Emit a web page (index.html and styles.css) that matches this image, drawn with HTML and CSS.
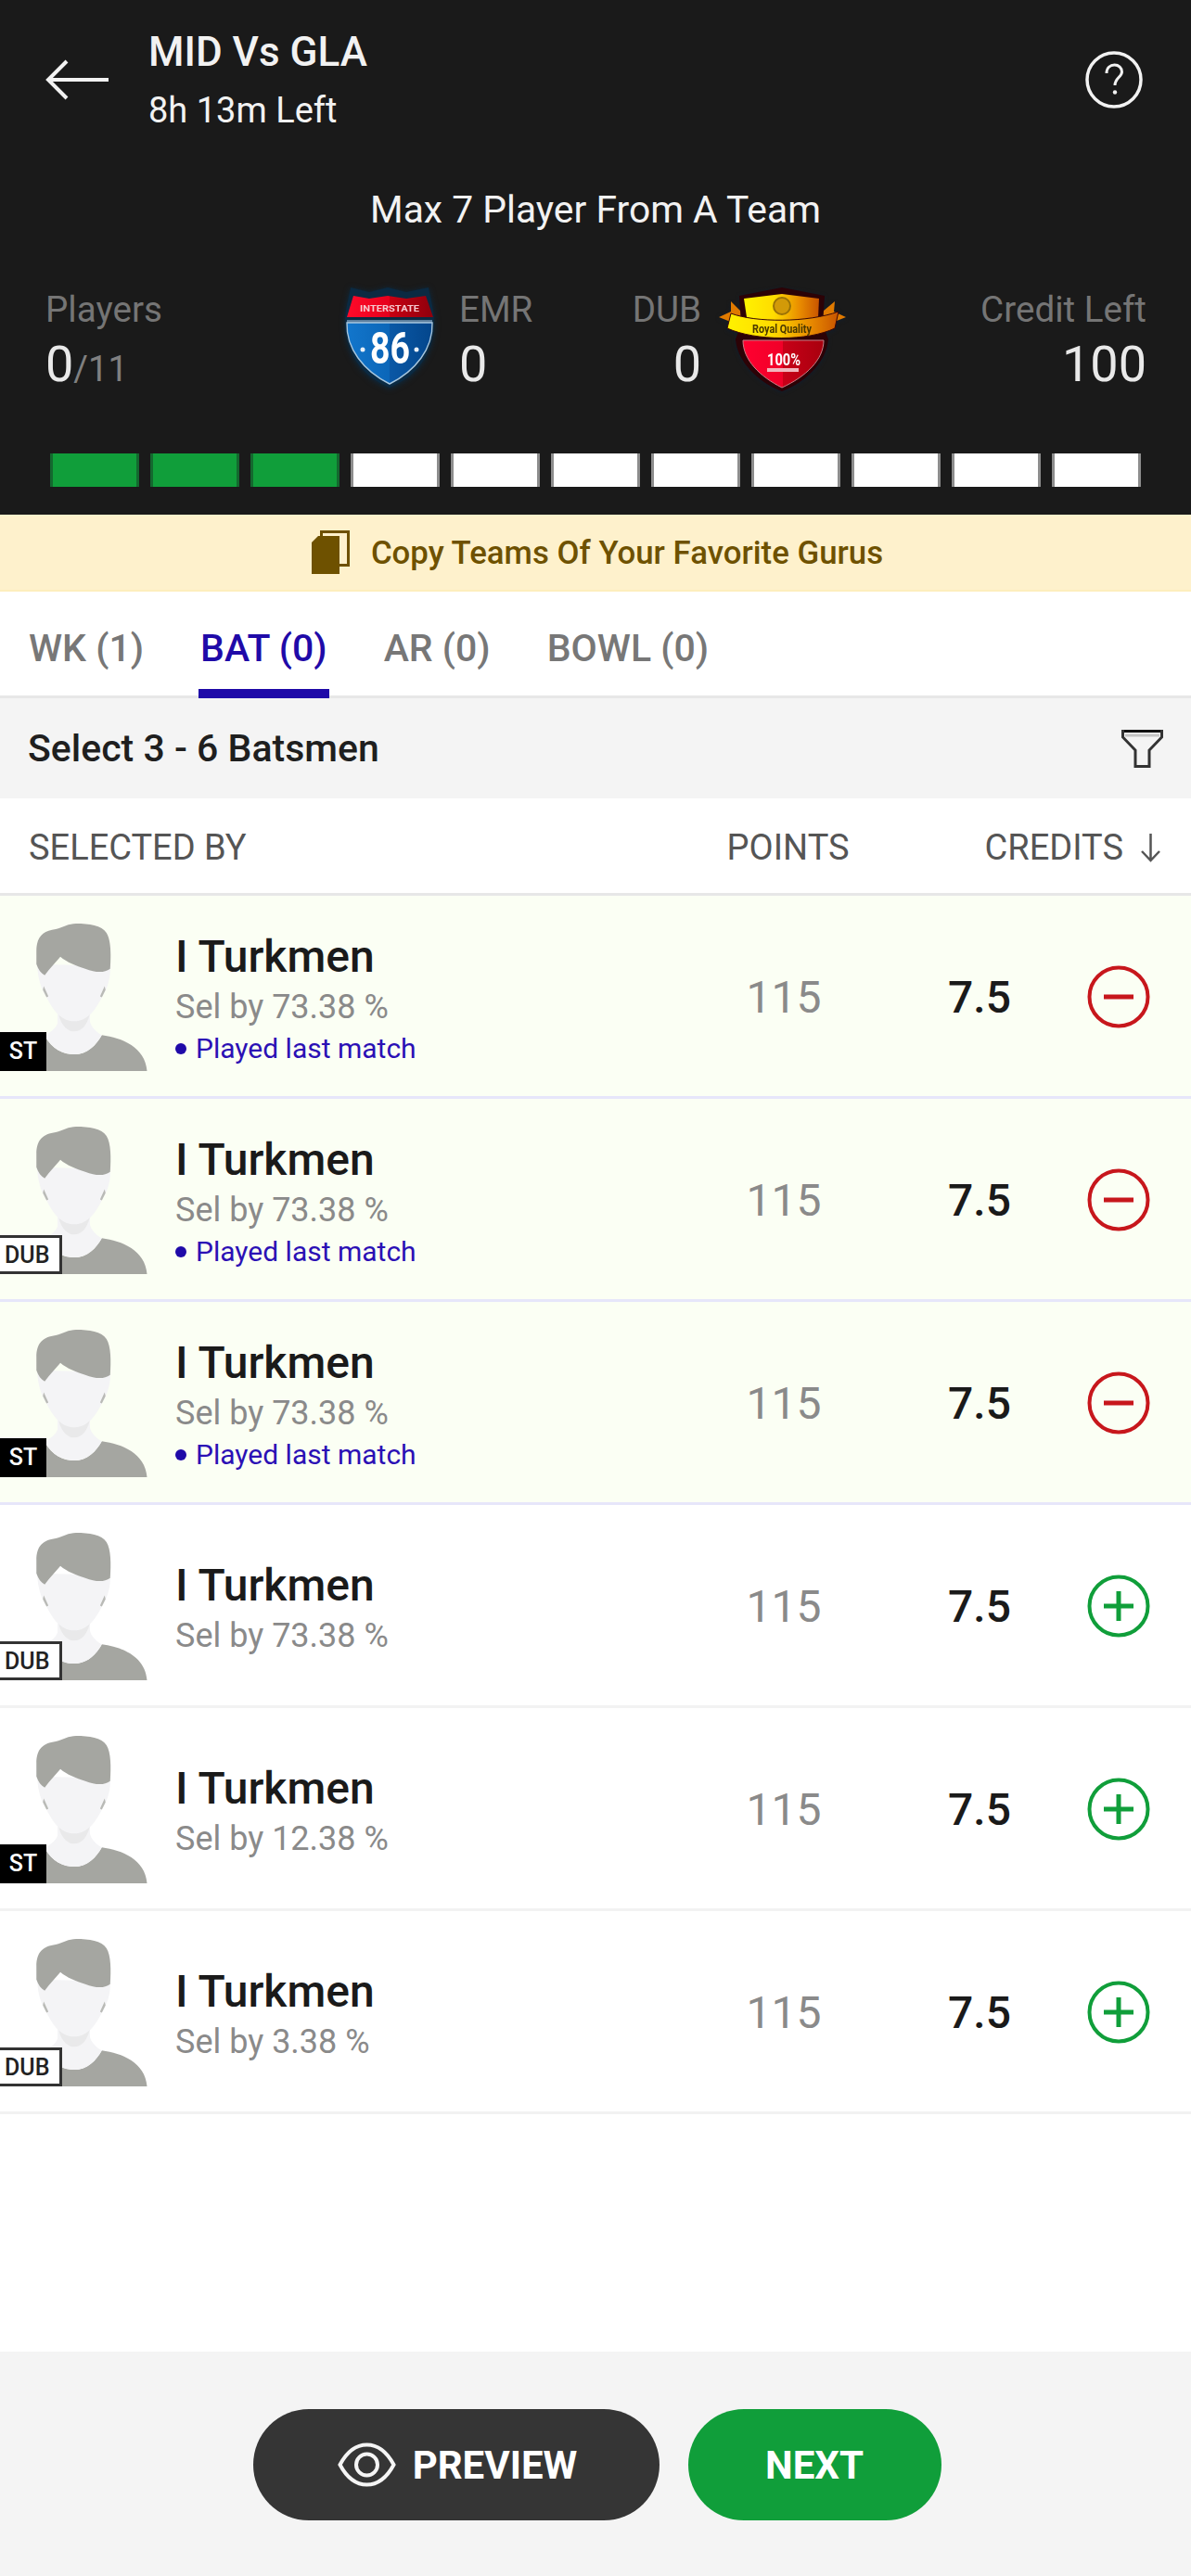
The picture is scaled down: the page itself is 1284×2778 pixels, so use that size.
FILE: index.html
```html
<!DOCTYPE html>
<html lang="en">
<head>
<meta charset="utf-8">
<title>Create Team</title>
<link rel="stylesheet" href="styles.css">
</head>
<body>
<svg class="defs" aria-hidden="true">
  <symbol id="avatar" viewBox="0 0 160 160">
    <path fill="#a5a6a1" d="M0 160C4 138 28 128 48 122C56 136 68 142 80 142C94 142 104 132 110 121C132 124 157 134 159 160Z"/>
    <path fill="#f4f4f6" d="M62 96V108C60 114 54 118 48 122C56 136 68 142 80 142C94 142 104 132 110 121C104 118 98 112 97 106V96Z"/>
    <path fill="#e9e9ea" d="M63 98C66 112 74 117 80 117C88 117 94 110 97 98Z"/>
    <path fill="#f4f4f6" d="M40 44C40 60 45 72 50 80C56 92 65 106 80 106C95 106 104 92 110 80C115 72 120 60 119 46Z"/>
    <path fill="#b9bab6" d="M47 68L52 79L50 80L46 72ZM113 68L108 79L110 80L114 72Z"/>
    <path fill="#a5a6a1" d="M39 30C39 14 46 8 60 6C68 4 74 0 82 0C96 0 110 2 115 10C120 18 120 34 119 49C112 54 103 53 92 49C82 46 72 42 65 36C60 42 54 48 48 56C44 54 41 50 39 44Z"/>
  </symbol>
  <symbol id="ico-minus" viewBox="0 0 68 68">
    <circle cx="34" cy="34" r="31.5" fill="none" stroke="#c7171c" stroke-width="4"/>
    <rect x="18" y="31.5" width="32" height="5" fill="#c7171c"/>
  </symbol>
  <symbol id="ico-plus" viewBox="0 0 68 68">
    <circle cx="34" cy="34" r="31.5" fill="none" stroke="#109e3a" stroke-width="4"/>
    <rect x="18" y="31.5" width="32" height="5" fill="#109e3a"/>
    <rect x="31.5" y="18" width="5" height="32" fill="#109e3a"/>
  </symbol>
</svg>
<div class="app">
  <header class="hdr">
    <div class="topbar">
      <svg class="back" viewBox="0 0 68 44"><path d="M68 22H3M23 2L3 22L23 42" fill="none" stroke="#f2f2f2" stroke-width="4"/></svg>
      <div class="match">
        <div class="match-title">MID Vs GLA</div>
        <div class="match-time">8h 13m Left</div>
      </div>
      <svg class="help" viewBox="0 0 62 62">
        <circle cx="31" cy="31" r="29" fill="none" stroke="#f2f2f2" stroke-width="3.5"/>
        <path d="M23 24C23 18 27 15 31.5 15C36 15 39.5 18 39.5 22.5C39.5 28 32 29 32 37" fill="none" stroke="#f2f2f2" stroke-width="3"/>
        <circle cx="32" cy="44.5" r="2.2" fill="#f2f2f2"/>
      </svg>
    </div>
    <div class="notice">Max 7 Player From A Team</div>
    <div class="stats">
      <div class="stat">
        <div class="stat-label">Players</div>
        <div class="stat-value">0<span class="stat-of">/11</span></div>
      </div>
      <div class="teams">
        <div class="team">
          <svg class="logo-a" viewBox="0 0 96 108">
            <defs>
              <linearGradient id="ba" x1="0" x2="1" y1="0" y2="0"><stop offset="0" stop-color="#1276cc"/><stop offset=".5" stop-color="#0b66b8"/><stop offset=".5" stop-color="#0a58a6"/><stop offset="1" stop-color="#03468c"/></linearGradient>
              <linearGradient id="ra" x1="0" x2="1" y1="0" y2="0"><stop offset="0" stop-color="#ff0a2a"/><stop offset=".5" stop-color="#e6001c"/><stop offset=".5" stop-color="#c80012"/><stop offset="1" stop-color="#8d000c"/></linearGradient>
            </defs>
            <path fill="#0b2a42" d="M6 0L26 5L46 0L66 5L90 0C92 12 96 24 96 38C96 70 78 96 48 108C18 96 0 70 0 38C0 24 4 12 6 0Z"/>
            <path fill="url(#ra)" d="M9 9L26 12L46 9L66 12L87 9L95 32H2Z"/>
            <rect x="2" y="35" width="92" height="3" fill="#5d7f9e"/>
            <path fill="url(#ba)" stroke="#a7c6de" stroke-width="1.4" d="M2 38H94C95 66 76 90 48 104C20 90 1 66 2 38Z"/>
            <text class="logo-small" x="48" y="26" text-anchor="middle" textLength="64" lengthAdjust="spacingAndGlyphs">INTERSTATE</text>
            <text class="logo-num" x="48.500" y="82" text-anchor="middle" textLength="43" lengthAdjust="spacingAndGlyphs">86</text>
            <circle cx="19" cy="67" r="2.500" fill="#e8f0f8"/>
            <circle cx="77" cy="67" r="2.500" fill="#e8f0f8"/>
          </svg>
          <div class="stat">
            <div class="stat-label">EMR</div>
            <div class="stat-value">0</div>
          </div>
        </div>
        <div class="team">
          <div class="stat stat-right">
            <div class="stat-label">DUB</div>
            <div class="stat-value">0</div>
          </div>
          <svg class="logo-b" viewBox="0 0 137 112">
            <defs>
              <linearGradient id="gb" x1="0" x2="1" y1="0" y2="0"><stop offset="0" stop-color="#fff200"/><stop offset=".4" stop-color="#ffdc00"/><stop offset=".75" stop-color="#e88a00"/><stop offset="1" stop-color="#c85400"/></linearGradient>
              <linearGradient id="rb" x1="0" x2="1" y1="0" y2="0"><stop offset="0" stop-color="#ff0030"/><stop offset=".5" stop-color="#f00028"/><stop offset=".5" stop-color="#c80018"/><stop offset="1" stop-color="#a8000e"/></linearGradient>
            </defs>
            <path fill="#2c0206" d="M22 9L68 0L114 9L112 40L118 56C116 80 94 102 68 112C42 102 20 80 18 56L24 40Z"/>
            <path fill="url(#gb)" d="M27 12L68 7L108 12L107 33C90 38 46 38 30 32Z"/>
            <circle cx="68" cy="20" r="9" fill="#d29a08" stroke="#9a7206" stroke-width="2"/>
            <path fill="#e07a00" d="M0 32L13 26L13 15L23 25L24 40L15 38Z"/>
            <path fill="#e07a00" d="M137 32L124 26L125 15L113 25L112 40L122 38Z"/>
            <path fill="url(#gb)" stroke="#3a0606" stroke-width="1" d="M13 28C40 38 96 38 129 26L125 44C96 58 40 58 9 44Z"/>
            <text class="logo-rib" x="68" y="49" text-anchor="middle" textLength="64" lengthAdjust="spacingAndGlyphs">Royal Quality</text>
            <path fill="url(#rb)" stroke="#c87f88" stroke-width="1" d="M26 57H113C113 78 94 96 68 108C44 96 26 78 26 57Z"/>
            <text class="logo-pct" x="70" y="84" text-anchor="middle" textLength="36" lengthAdjust="spacingAndGlyphs">100%</text>
            <rect x="52" y="87" width="34" height="4" fill="#f1b5bd"/>
          </svg>
        </div>
      </div>
      <div class="stat stat-right">
        <div class="stat-label">Credit Left</div>
        <div class="stat-value">100</div>
      </div>
    </div>
    <div class="progress">
      <span class="seg seg-on"></span><span class="seg seg-on"></span><span class="seg seg-on"></span>
      <span class="seg"></span><span class="seg"></span><span class="seg"></span><span class="seg"></span><span class="seg"></span><span class="seg"></span><span class="seg"></span><span class="seg"></span>
    </div>
  </header>

  <div class="banner">
    <svg class="copy" viewBox="0 0 41 47">
      <rect x="10.500" y="1.500" width="29" height="36" fill="none" stroke="#6e5100" stroke-width="3"/>
      <path fill="#6e5100" d="M7 6H30V47H0V13Z"/>
    </svg>
    <span class="banner-text">Copy Teams Of Your Favorite Gurus</span>
  </div>

  <nav class="tabs">
    <div class="tab">WK (1)</div>
    <div class="tab tab-on">BAT (0)</div>
    <div class="tab">AR (0)</div>
    <div class="tab">BOWL (0)</div>
  </nav>

  <div class="filter">
    <span class="filter-text">Select 3 - 6 Batsmen</span>
    <svg class="funnel" viewBox="0 0 45 41">
      <path d="M1.500 1.500H43.500V8L30 22V39.500H15V22L1.500 8Z" fill="none" stroke="#333" stroke-width="3"/>
      <path d="M3 1.500H42" stroke="#111" stroke-width="3"/>
      <path d="M4 6H41" stroke="#c4c4c4" stroke-width="3"/>
    </svg>
  </div>

  <div class="cols">
    <span class="col-sel">SELECTED BY</span>
    <span>POINTS</span>
    <span class="col-cred">CREDITS</span>
    <svg class="col-arrow" viewBox="0 0 21 31"><path d="M10.500 0V29M1 19L10.500 29L20 19" fill="none" stroke="#555" stroke-width="2.500"/></svg>
  </div>

  <section class="list">
    <article class="row row-on">
      <div class="pic"><svg class="pic-art"><use href="#avatar"/></svg><span class="tag tag-st">ST</span></div>
      <div class="info"><div class="name">I Turkmen</div><div class="sel">Sel by 73.38 %</div><div class="played"><i class="dot"></i>Played last match</div></div>
      <div class="pts">115</div><div class="cred">7.5</div>
      <svg class="act"><use href="#ico-minus"/></svg>
    </article>
    <article class="row row-on">
      <div class="pic"><svg class="pic-art"><use href="#avatar"/></svg><span class="tag tag-dub">DUB</span></div>
      <div class="info"><div class="name">I Turkmen</div><div class="sel">Sel by 73.38 %</div><div class="played"><i class="dot"></i>Played last match</div></div>
      <div class="pts">115</div><div class="cred">7.5</div>
      <svg class="act"><use href="#ico-minus"/></svg>
    </article>
    <article class="row row-on">
      <div class="pic"><svg class="pic-art"><use href="#avatar"/></svg><span class="tag tag-st">ST</span></div>
      <div class="info"><div class="name">I Turkmen</div><div class="sel">Sel by 73.38 %</div><div class="played"><i class="dot"></i>Played last match</div></div>
      <div class="pts">115</div><div class="cred">7.5</div>
      <svg class="act"><use href="#ico-minus"/></svg>
    </article>
    <article class="row">
      <div class="pic"><svg class="pic-art"><use href="#avatar"/></svg><span class="tag tag-dub">DUB</span></div>
      <div class="info"><div class="name">I Turkmen</div><div class="sel">Sel by 73.38 %</div></div>
      <div class="pts">115</div><div class="cred">7.5</div>
      <svg class="act"><use href="#ico-plus"/></svg>
    </article>
    <article class="row">
      <div class="pic"><svg class="pic-art"><use href="#avatar"/></svg><span class="tag tag-st">ST</span></div>
      <div class="info"><div class="name">I Turkmen</div><div class="sel">Sel by 12.38 %</div></div>
      <div class="pts">115</div><div class="cred">7.5</div>
      <svg class="act"><use href="#ico-plus"/></svg>
    </article>
    <article class="row">
      <div class="pic"><svg class="pic-art"><use href="#avatar"/></svg><span class="tag tag-dub">DUB</span></div>
      <div class="info"><div class="name">I Turkmen</div><div class="sel">Sel by 3.38 %</div></div>
      <div class="pts">115</div><div class="cred">7.5</div>
      <svg class="act"><use href="#ico-plus"/></svg>
    </article>
  </section>

  <footer class="foot">
    <button class="btn btn-dark">
      <svg class="eye" viewBox="0 0 63 48">
        <path d="M2.500 24C10 10 20 2.500 31.500 2.500C43 2.500 53 10 60.500 24C53 38 43 45.500 31.500 45.500C20 45.500 10 38 2.500 24Z" fill="none" stroke="#f5f5f5" stroke-width="4"/>
        <circle cx="31.500" cy="24" r="11.500" fill="none" stroke="#f5f5f5" stroke-width="4"/>
      </svg>
      PREVIEW
    </button>
    <button class="btn btn-green">NEXT</button>
  </footer>
</div>
</body>
</html>
```

FILE: styles.css
```css
* { box-sizing: border-box; }
html, body { margin: 0; padding: 0; background: #fff; }
body { font-family: Roboto, "Liberation Sans", sans-serif; }
.defs { display: block; width: 0; height: 0; overflow: hidden; }

.app { width: 1284px; height: 2778px; display: flex; flex-direction: column; overflow: hidden; background: #fff; }

/* Header */
.hdr { height: 555px; background: #1a1a1a; flex: none; }
.topbar { display: flex; align-items: center; padding: 31px 52px 0 49px; }
.back { width: 68px; height: 44px; flex: none; }
.match { flex: 1; margin-left: 43px; color: #f2f2f2; }
.match-title { font-size: 44px; line-height: 50px; font-weight: 500; }
.match-time { font-size: 38px; line-height: 44px; margin-top: 16px; }
.help { width: 62px; height: 62px; flex: none; }
.notice { margin-top: 61px; text-align: center; font-size: 40.8px; line-height: 48px; color: #f2f2f2; }

.stats { display: grid; grid-template-columns: 323px 540px 1fr; margin-top: 60px; padding: 0 48px 0 49px; }
.stat { padding-top: 2px; }
.stat-right { text-align: right; }
.stat-label { font-size: 38.6px; line-height: 44px; color: #757575; }
.stat-value { font-size: 54px; line-height: 60px; margin-top: 7px; color: #e9e9e9; }
.stat-of { font-size: 38px; line-height: 0; color: #808080; }
.teams { display: flex; justify-content: space-between; }
.team { display: flex; }
.logo-a { width: 96px; height: 108px; margin-right: 27px; filter: drop-shadow(0 1px 3px #0b2a42); }
.logo-b { width: 137px; height: 112px; margin-left: 19px; filter: drop-shadow(0 1px 2px #101c2c); }
.logo-small { font: 700 9px Roboto, sans-serif; fill: #f6c9cf; }
.logo-num { font: 700 48px Roboto, sans-serif; fill: #fff; }
.logo-rib { font: 700 12px Roboto, sans-serif; fill: #4a3800; }
.logo-pct { font: 700 19px Roboto, sans-serif; fill: #fff; }

.progress { display: flex; gap: 12px; margin: 66px 0 0 54px; }
.seg { width: 96px; height: 36px; background: #fff; border-left: 3px solid #8d8d8d; border-right: 3px solid #8d8d8d; }
.seg-on { background: #109e3a; border-color: #14682f; }

/* Banner */
.banner { height: 83px; flex: none; display: flex; align-items: center; justify-content: center; padding-left: 4px; background: #fef1cc; border-bottom: 2px solid #fdeebd; }
.copy { width: 41px; height: 47px; margin-right: 23px; }
.banner-text { font-size: 34.8px; font-weight: 500; color: #6e5100; }

/* Tabs */
.tabs { height: 115px; flex: none; display: flex; gap: 57px; padding-left: 29px; background: #fff; border-bottom: 3px solid #e7e7e7; }
.tab { height: 115px; padding: 37px 2px 0; border-bottom: 10px solid transparent; font-size: 41px; line-height: 48px; font-weight: 500; color: #777; }
.tab-on { color: #1f0aa8; border-bottom-color: #1f0aa8; }

/* Filter */
.filter { height: 108px; flex: none; display: flex; align-items: center; justify-content: space-between; padding: 0 30px 0 30px; background: #f4f4f4; }
.filter-text { font-size: 41px; font-weight: 500; color: #1f1f1f; }
.funnel { width: 45px; height: 41px; }

/* Column titles */
.cols { height: 105px; flex: none; display: flex; align-items: center; padding: 4px 33px 0 31px; border-bottom: 3px solid #e7e7e7; font-size: 38px; color: #555; }
.col-sel { flex: 1; }
.col-cred { margin-left: 146px; }
.col-arrow { width: 21px; height: 31px; margin-left: 19px; }

/* Players */
.list { flex: none; }
.row { height: 219px; display: flex; align-items: center; border-bottom: 3px solid #f2f2f2; background: #fff; }
.row-on { background: #fbfff4; border-bottom-color: #e6e6fa; }
.pic { position: relative; width: 160px; height: 159px; flex: none; align-self: flex-start; margin: 30px 29px 0 0; }
.pic-art { display: block; width: 160px; height: 159px; }
.tag { position: absolute; left: 0; bottom: 0; height: 42px; font-size: 25px; line-height: 38px; font-weight: 500; }
.tag-st { width: 50px; padding-top: 2px; text-align: center; background: #000; color: #fff; }
.tag-dub { width: 67px; border: 3px solid #333; border-left: 0; padding-left: 5px; background: #fff; color: #222; line-height: 38px; }
.info { flex: 1; padding-top: 5px; }
.name { font-size: 48px; line-height: 54px; font-weight: 500; color: #1a1a1a; }
.sel { font-size: 36px; line-height: 42px; margin-top: 6px; color: #8a8a8a; }
.played { display: flex; align-items: center; font-size: 30px; line-height: 36px; margin-top: 6px; color: #2b10b5; }
.dot { width: 12px; height: 12px; margin-right: 10px; border-radius: 50%; background: #1f0aa8; }
.pts, .cred { width: 140px; padding-top: 4px; text-align: center; font-size: 48px; line-height: 56px; }
.pts { color: #8a8a8a; }
.cred { margin-left: 71px; font-weight: 500; color: #1a1a1a; }
.act { width: 68px; height: 68px; flex: none; margin: 2px 44px 0 46px; }

/* Footer */
.foot { margin-top: auto; height: 242px; flex: none; display: flex; justify-content: center; gap: 31px; padding: 62px 0 0 3px; background: #f4f4f4; }
.btn { height: 120px; border: 0; border-radius: 60px; display: flex; align-items: center; justify-content: center; font-family: inherit; font-size: 42px; font-weight: 700; color: #fff; }
.btn-dark { width: 438px; padding-left: 9px; background: #353535; }
.btn-green { width: 273px; background: #109e3a; }
.eye { width: 63px; height: 48px; margin-right: 18px; }
```
